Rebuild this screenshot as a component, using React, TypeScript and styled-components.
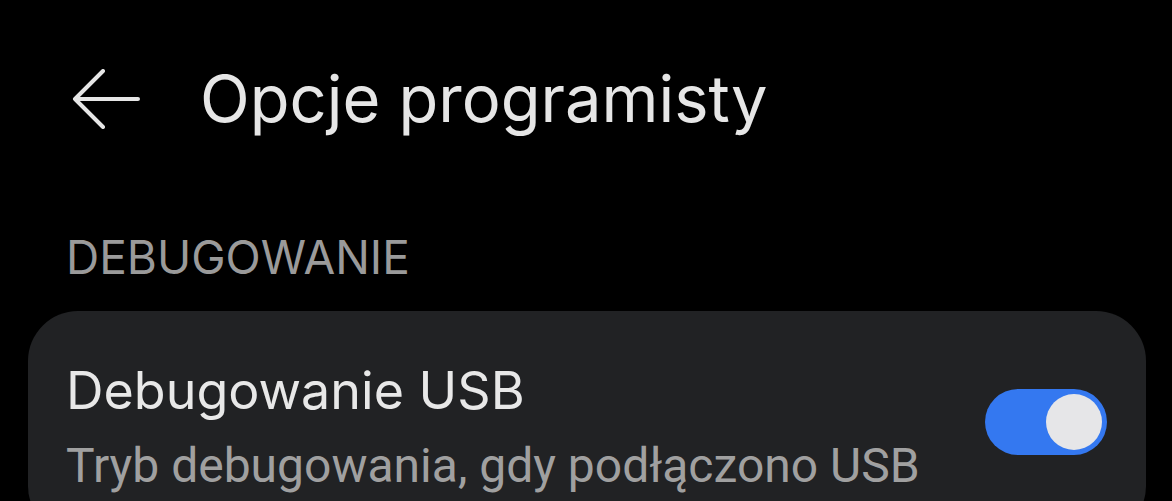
import React from "react";
import styled, { createGlobalStyle } from "styled-components";

const Global = createGlobalStyle`
  html, body { margin: 0; padding: 0; background: #000; }
  body { font-family: Inter, Roboto, "Noto Sans", sans-serif; overflow: hidden; }
`;

const Page = styled.div`
  width: 1172px;
  height: 501px;
  background: #000;
  display: flex;
  flex-direction: column;
  overflow: hidden;
`;

const Header = styled.header`
  display: flex;
  align-items: center;
  height: 80px;
  margin-top: 59px;
  padding-left: 72px;
  gap: 60px;
`;

const BackIcon = styled.svg`
  width: 68px;
  height: 60px;
  flex: none;
`;

const Title = styled.h1`
  margin: 0;
  font-family: Inter, sans-serif;
  font-size: 65px;
  line-height: 80px;
  font-weight: 400;
  color: #e6e6e6;
`;

const SectionLabel = styled.div`
  margin: 88px 0 0 66px;
  font-family: Inter, sans-serif;
  font-size: 46px;
  color: #9a9a9a;
  line-height: 60px;
`;

const Card = styled.section`
  margin: 24px 26px 0 28px;
  background: #212224;
  border-radius: 50px;
  padding: 48px 39px 40px 38px;
  display: flex;
  align-items: flex-start;
  justify-content: space-between;
`;

const TextCol = styled.div`
  display: flex;
  flex-direction: column;
`;

const ItemTitle = styled.div`
  font-family: Inter, sans-serif;
  font-size: 52px;
  color: #e8e8e8;
  line-height: 64px;
`;

const ItemSub = styled.div`
  font-family: Roboto, sans-serif;
  font-size: 48px;
  color: #a0a0a0;
  line-height: 60px;
  margin-top: 13px;
  white-space: nowrap;
`;

const Switch = styled.div<{ $on: boolean }>`
  width: 122px;
  height: 66px;
  border-radius: 33px;
  background: ${(p) => (p.$on ? "#3478f0" : "#555")};
  display: flex;
  align-items: center;
  justify-content: ${(p) => (p.$on ? "flex-end" : "flex-start")};
  padding: 0 5px;
  box-sizing: border-box;
  margin-top: 30px;
  flex: none;
`;

const Knob = styled.div`
  width: 56px;
  height: 56px;
  border-radius: 50%;
  background: #e6e6e8;
`;

export default function App() {
  return (
    <Page>
      <Global />
      <Header>
        <BackIcon viewBox="0 0 68 60">
          <path
            d="M66 30 H3 M31 2 L3 30 L31 58"
            fill="none"
            stroke="#e6e6e6"
            strokeWidth="4"
            strokeLinecap="round"
            strokeLinejoin="round"
          />
        </BackIcon>
        <Title>Opcje programisty</Title>
      </Header>
      <SectionLabel>DEBUGOWANIE</SectionLabel>
      <Card>
        <TextCol>
          <ItemTitle>Debugowanie USB</ItemTitle>
          <ItemSub>Tryb debugowania, gdy podłączono USB</ItemSub>
        </TextCol>
        <Switch $on={true}>
          <Knob />
        </Switch>
      </Card>
    </Page>
  );
}
